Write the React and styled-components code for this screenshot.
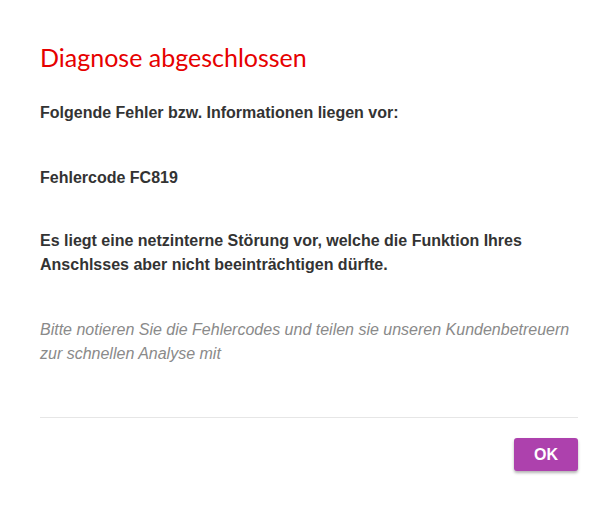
import React from "react";
import styled, { createGlobalStyle } from "styled-components";

const GlobalStyle = createGlobalStyle`
  html, body {
    margin: 0;
    padding: 0;
    background: #ffffff;
  }
`;

const Dialog = styled.div`
  width: 616px;
  height: 509px;
  box-sizing: border-box;
  padding: 40px 38px 0 40px;
  display: flex;
  flex-direction: column;
  font-family: "Liberation Sans", Arial, sans-serif;
`;

const Title = styled.h1`
  margin: 0;
  font-family: Lato, "Open Sans", sans-serif;
  font-weight: 400;
  font-size: 25px;
  line-height: 34px;
  color: #e60000;
`;

const Text = styled.p`
  margin: ${(p) => p.top}px 0 0;
  font-family: "Liberation Sans", Arial, sans-serif;
  font-size: 16px;
  line-height: 24px;
  font-weight: ${(p) => (p.hint ? 400 : 700)};
  font-style: ${(p) => (p.hint ? "italic" : "normal")};
  color: ${(p) => (p.hint ? "#8a8a8a" : "#333333")};
`;

const Divider = styled.hr`
  margin: 51px 0 0;
  border: 0;
  border-top: 1px solid #e6e6e6;
`;

const Footer = styled.div`
  display: flex;
  justify-content: flex-end;
  padding-top: 20px;
`;

const Button = styled.button`
  width: 64px;
  height: 33px;
  border: 0;
  border-radius: 3px;
  background: #ad41ad;
  color: #ffffff;
  font-family: "Liberation Sans", Arial, sans-serif;
  font-weight: 700;
  font-size: 16px;
  box-shadow: 0 2px 3px rgba(0, 0, 0, 0.3);
  cursor: pointer;
`;

export default function App() {
  return (
    <>
      <GlobalStyle />
      <Dialog>
        <Title>Diagnose abgeschlossen</Title>
        <Text top={27}>Folgende Fehler bzw. Informationen liegen vor:</Text>
        <Text top={41}>Fehlercode FC819</Text>
        <Text top={39}>
          Es liegt eine netzinterne Störung vor, welche die Funktion Ihres
          Anschlsses aber nicht beeinträchtigen dürfte.
        </Text>
        <Text top={41} hint>
          Bitte notieren Sie die Fehlercodes und teilen sie unseren
          Kundenbetreuern zur schnellen Analyse mit
        </Text>
        <Divider />
        <Footer>
          <Button>OK</Button>
        </Footer>
      </Dialog>
    </>
  );
}
